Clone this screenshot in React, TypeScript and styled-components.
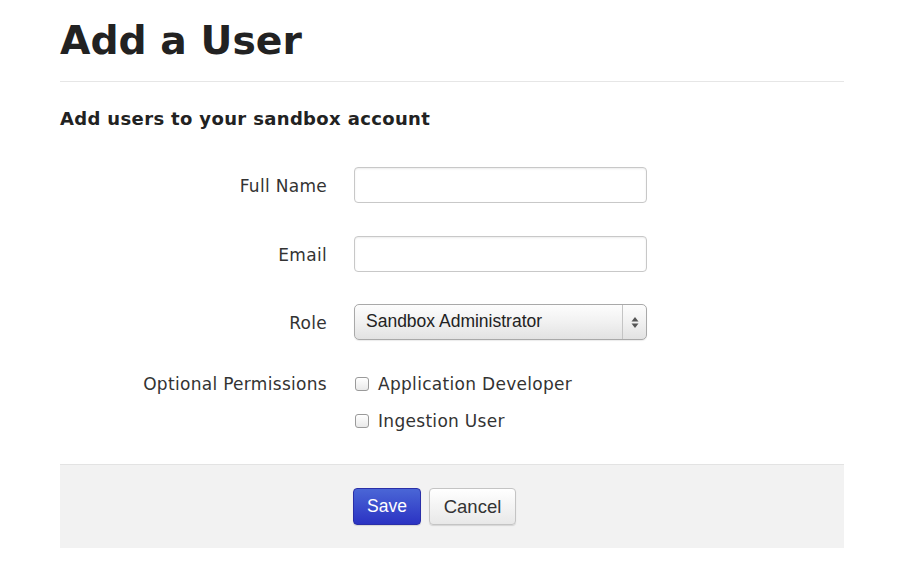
import React from "react";
import styled, { createGlobalStyle } from "styled-components";

const Global = createGlobalStyle`
  html, body { margin: 0; padding: 0; background: #fff; }
  body { font-family: "DejaVu Sans", Verdana, sans-serif; color: #333; }
`;

const Page = styled.div`
  width: 784px;
  padding: 17px 0 0 60px;
`;

const Title = styled.h1`
  margin: 0;
  font-family: "DejaVu Sans", Verdana, sans-serif;
  font-weight: bold;
  font-size: 39.3px;
  line-height: 48px;
  color: #222;
  padding-bottom: 16px;
  border-bottom: 1px solid #e6e6e6;
`;

const Subtitle = styled.h2`
  margin: 25px 0 0;
  font-size: 18px;
  letter-spacing: 0.35px;
  line-height: 24px;
  font-weight: bold;
  color: #222;
`;

const Form = styled.div`
  display: grid;
  grid-template-columns: 267px 293px;
  column-gap: 27px;
  margin-top: 36px;
`;

const Label = styled.div<{ $top?: number }>`
  text-align: right;
  font-size: 17px;
  letter-spacing: 0.3px;
  height: 36px;
  line-height: 34px;
  padding-top: 2px;
  box-sizing: border-box;
  color: #333;
  margin-top: ${(p) => p.$top ?? 0}px;
`;

const Field = styled.div<{ $top?: number }>`
  margin-top: ${(p) => p.$top ?? 0}px;
`;

const TextInput = styled.input`
  box-sizing: border-box;
  display: block;
  width: 293px;
  height: 36px;
  border: 1px solid #c8c8c8;
  border-radius: 4px;
  box-shadow: inset 0 1px 2px rgba(0, 0, 0, 0.08);
  background: #fff;
  outline: none;
  padding: 0 10px;
`;

const Select = styled.div`
  box-sizing: border-box;
  display: flex;
  align-items: stretch;
  width: 293px;
  height: 36px;
  border: 1px solid #a9a9a9;
  border-radius: 5px;
  background: linear-gradient(#fdfdfd, #f1f1f1 50%, #e2e2e2);
  box-shadow: 0 1px 1px rgba(0, 0, 0, 0.08);
  font-family: "Liberation Sans", Arial, sans-serif;
  font-size: 17.5px;
  color: #222;
`;

const SelectText = styled.div`
  flex: 1;
  display: flex;
  align-items: center;
  padding-left: 11px;
  margin-top: -2px;
`;

const SelectArrows = styled.div`
  width: 23px;
  border-left: 1px solid #c4c4c4;
  display: flex;
  align-items: center;
  justify-content: center;
`;

const PermLabel = styled.div`
  text-align: right;
  font-size: 17px;
  letter-spacing: 0.3px;
  line-height: 28px;
  color: #333;
  margin-top: 30px;
`;

const Checks = styled.div`
  margin-top: 30px;
  display: flex;
  flex-direction: column;
  gap: 9px;
`;

const CheckRow = styled.label`
  display: flex;
  align-items: center;
  gap: 9px;
  font-size: 17px;
  letter-spacing: 0.3px;
  line-height: 28px;
  color: #333;
  padding-left: 1px;
`;

const Box = styled.span`
  box-sizing: border-box;
  flex: none;
  width: 14px;
  height: 14px;
  border: 1px solid #9a9a9a;
  border-radius: 3px;
  background: linear-gradient(#fff, #e9e9e9);
  box-shadow: inset 0 1px 1px rgba(255, 255, 255, 0.6);
  margin-top: -1px;
`;

const Footer = styled.div`
  margin-top: 29px;
  border-top: 1px solid #e3e3e3;
  background: #f2f2f2;
  height: 84px;
  box-sizing: border-box;
  padding: 23px 0 0 293px;
  display: flex;
  gap: 8px;
  align-items: flex-start;
`;

const Button = styled.button<{ $primary?: boolean }>`
  box-sizing: border-box;
  height: 37px;
  padding: 0;
  border-radius: 4px;
  font-family: "Liberation Sans", Arial, sans-serif;
  font-size: ${(p) => (p.$primary ? 17.5 : 18.5)}px;
  line-height: 35px;
  cursor: pointer;
  color: ${(p) => (p.$primary ? "#fff" : "#333")};
  border: 1px solid ${(p) => (p.$primary ? "#2a2fa8" : "#c4c4c4")};
  background: ${(p) =>
    p.$primary
      ? "linear-gradient(#4a66d6, #2b33c3)"
      : "linear-gradient(#ffffff, #e8e8e8)"};
  box-shadow: 0 1px 1px rgba(0, 0, 0, 0.12);
  width: ${(p) => (p.$primary ? 68 : 87)}px;
`;

export default function App() {
  return (
    <>
      <Global />
      <Page>
        <Title>Add a User</Title>
        <Subtitle>Add users to your sandbox account</Subtitle>
        <Form>
          <Label>Full Name</Label>
          <Field>
            <TextInput type="text" />
          </Field>
          <Label $top={33}>Email</Label>
          <Field $top={33}>
            <TextInput type="text" />
          </Field>
          <Label $top={32}>Role</Label>
          <Field $top={32}>
            <Select>
              <SelectText>Sandbox Administrator</SelectText>
              <SelectArrows>
                <svg width="8" height="13" viewBox="0 0 8 13">
                  <path d="M4 1 L7.5 5.5 H0.5 Z" fill="#555" />
                  <path d="M4 12 L7.5 7.5 H0.5 Z" fill="#555" />
                </svg>
              </SelectArrows>
            </Select>
          </Field>
          <PermLabel>Optional Permissions</PermLabel>
          <Checks>
            <CheckRow>
              <Box />
              Application Developer
            </CheckRow>
            <CheckRow>
              <Box />
              Ingestion User
            </CheckRow>
          </Checks>
        </Form>
        <Footer>
          <Button $primary>Save</Button>
          <Button>Cancel</Button>
        </Footer>
      </Page>
    </>
  );
}
